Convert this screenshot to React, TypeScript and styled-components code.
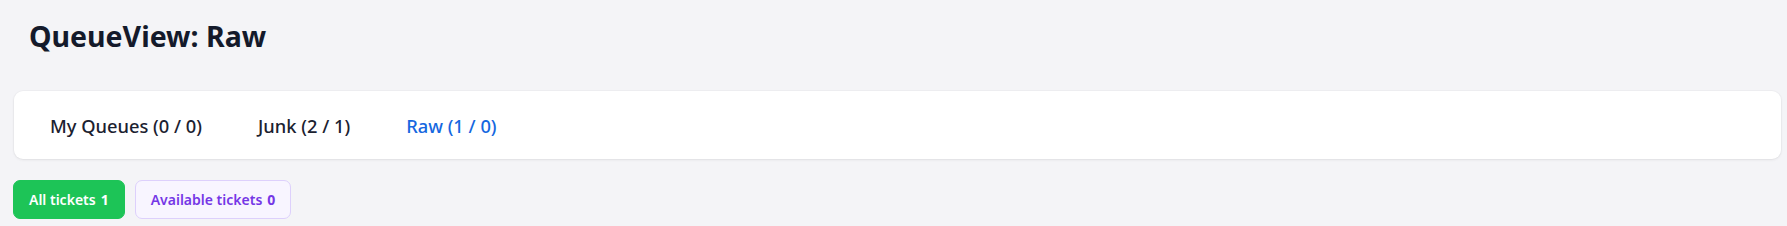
import React, { useState } from 'react';
import styled, { createGlobalStyle } from 'styled-components';

const GlobalStyle = createGlobalStyle`
  html, body {
    margin: 0;
    padding: 0;
    background: #f4f4f7;
    font-family: "Noto Sans", "Open Sans", Arial, sans-serif;
  }
`;

const Page = styled.div`
  padding: 0 6px 0 14px;
  display: flex;
  flex-direction: column;
`;

const Title = styled.h1`
  margin: 0;
  padding: 16px 0 0 15px;
  height: 91px;
  box-sizing: border-box;
  font-size: 28.5px;
  line-height: 40px;
  font-weight: 700;
  color: #141a2b;
`;

const TabCard = styled.div`
  display: flex;
  align-items: center;
  height: 68px;
  padding: 0 8px;
  background: #ffffff;
  border-radius: 9px;
  box-shadow: 0 1px 3px rgba(0, 0, 0, 0.07), 0 0 0 1px rgba(0, 0, 0, 0.02);
`;

const Tab = styled.button<{ active?: boolean }>`
  border: none;
  background: none;
  padding: 0 28px;
  font-family: inherit;
  font-size: 18.3px;
  font-weight: 500;
  color: ${p => (p.active ? '#1567e0' : '#1b2130')};
  cursor: pointer;
`;

const FilterRow = styled.div`
  display: flex;
  gap: 10px;
  margin-top: 21px;
  margin-left: -1px;
`;

const Filter = styled.button<{ variant: 'green' | 'violet' }>`
  height: 39px;
  padding: 0 15px;
  border-radius: 7px;
  font-family: inherit;
  font-size: 14px;
  font-weight: 600;
  cursor: pointer;
  display: flex;
  align-items: center;
  gap: 5px;
  ${p =>
    p.variant === 'green'
      ? `
    background: #1dc457;
    border: 1px solid #1dc457;
    color: #ffffff;
  `
      : `
    background: #f8f5ff;
    border: 1px solid #ddd0fc;
    color: #7537e6;
  `}
`;

const Count = styled.span`
  font-weight: 700;
`;

const tabs = [
  { name: 'My Queues', total: 0, open: 0 },
  { name: 'Junk', total: 2, open: 1 },
  { name: 'Raw', total: 1, open: 0 },
];

export default function App() {
  const [active, setActive] = useState('Raw');
  const [filter, setFilter] = useState('all');

  return (
    <>
      <GlobalStyle />
      <Page>
        <Title>QueueView: {active}</Title>
        <TabCard>
          {tabs.map(t => (
            <Tab key={t.name} active={active === t.name} onClick={() => setActive(t.name)}>
              {t.name} ({t.total} / {t.open})
            </Tab>
          ))}
        </TabCard>
        <FilterRow>
          <Filter variant="green" onClick={() => setFilter('all')}>
            All tickets <Count>1</Count>
          </Filter>
          <Filter variant="violet" onClick={() => setFilter('available')}>
            Available tickets <Count>0</Count>
          </Filter>
        </FilterRow>
      </Page>
    </>
  );
}
